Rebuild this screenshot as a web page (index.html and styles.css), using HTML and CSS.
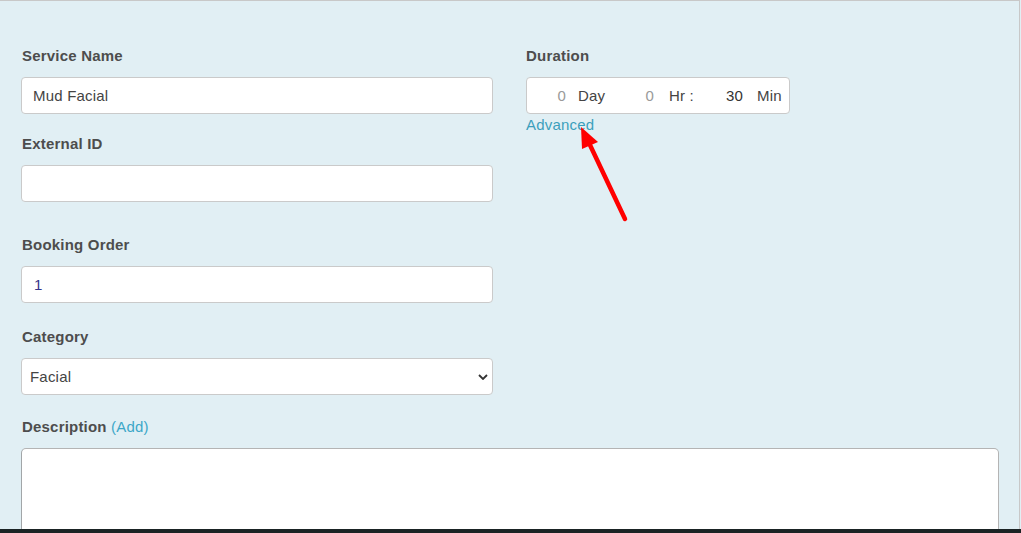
FILE: index.html
```html
<!DOCTYPE html>
<html lang="en">
<head>
    <meta charset="UTF-8">
    <title>Edit Service</title>
    <link rel="stylesheet" href="styles.css">
</head>
<body>
    <div class="panel">
        <div class="columns">
            <div class="col">
                <div class="field">
                    <label class="field-label">Service Name</label>
                    <input class="text-input" type="text" value="Mud Facial">
                </div>
                <div class="field field-ext">
                    <label class="field-label">External ID</label>
                    <input class="text-input" type="text" value="">
                </div>
                <div class="field field-order">
                    <label class="field-label">Booking Order</label>
                    <input class="text-input order-input" type="text" value="1">
                </div>
                <div class="field field-cat">
                    <label class="field-label">Category</label>
                    <div class="select-wrap">
                        <select class="select-input">
                            <option>Facial</option>
                            <option>Massage</option>
                            <option>Nails</option>
                        </select>
                        <svg class="chevron" width="10" height="6" viewBox="0 0 10 6">
                            <path d="M1 1 L5 5 L9 1" fill="none" stroke="#333" stroke-width="1.8"/>
                        </svg>
                    </div>
                </div>
            </div>

            <div class="col">
                <div class="field">
                    <label class="field-label duration-label">Duration</label>
                    <div class="duration">
                        <input class="dur-num dur-day" type="text" placeholder="0">
                        <span class="dur-unit unit-day">Day</span>
                        <input class="dur-num dur-hr" type="text" placeholder="0">
                        <span class="dur-unit unit-hr">Hr :</span>
                        <input class="dur-num dur-min" type="text" value="30">
                        <span class="dur-unit unit-min">Min</span>
                    </div>
                    <a href="#" class="link advanced-link">Advanced</a>
                </div>
            </div>
        </div>

        <div class="field field-desc">
            <label class="field-label">Description <a href="#" class="link add-link">(Add)</a></label>
            <textarea class="desc-input"></textarea>
        </div>

        <!-- annotation arrow -->
        <svg class="arrow" width="1021" height="533" viewBox="0 0 1021 533">
            <line x1="625" y1="219" x2="590" y2="145" stroke="#ff0000" stroke-width="4.5" stroke-linecap="round"/>
            <polygon points="581,127 582,149 598,142" fill="#ff0000"/>
        </svg>
    </div>
    <div class="bottom-bar"></div>
</body>
</html>
```

FILE: styles.css
```css
* {
    margin: 0;
    padding: 0;
    box-sizing: border-box;
}

body {
    font-family: 'Liberation Sans', Arial, sans-serif;
    font-size: 15px;
    letter-spacing: 0.2px;
    color: #444;
    background-color: #e1eff4;
    overflow: hidden;
}

.panel {
    position: relative;
    width: 1020px;
    height: 529px;
    overflow: hidden;
    border-top: 1px solid #c8c8c8;
    border-right: 1px solid #c8c8c8;
    padding: 46px 20px 0 21px;
}

.bottom-bar {
    height: 4px;
    background-color: #1a2324;
}

.columns {
    display: grid;
    grid-template-columns: 472px 1fr;
    column-gap: 33px;
}

.field-label {
    display: block;
    font-weight: bold;
    font-size: 15px;
    line-height: 17px;
    color: #4d4d4d;
    margin-bottom: 13px;
    padding-left: 1px;
}

.duration-label {
    padding-left: 0;
}

.field-ext {
    margin-top: 21px;
}

.field-order {
    margin-top: 34px;
}

.field-cat {
    margin-top: 25px;
}

.field-desc {
    margin-top: 23px;
}

.text-input,
.select-input {
    display: block;
    width: 100%;
    height: 37px;
    border: 1px solid #cacaca;
    border-radius: 4px;
    background: #fff;
    font-family: inherit;
    font-size: 15px;
    letter-spacing: 0.2px;
    color: #444;
    padding: 0 11px;
    outline: none;
}

.order-input {
    color: #34348a;
    padding-left: 12px;
}

.select-wrap {
    position: relative;
}

.select-input {
    appearance: none;
    -webkit-appearance: none;
    padding-left: 8px;
    height: 37px;
}

.chevron {
    position: absolute;
    right: 5px;
    top: 16px;
    pointer-events: none;
}

.duration {
    display: flex;
    align-items: center;
    width: 264px;
    height: 37px;
    background: #fff;
    border: 1px solid #cacaca;
    border-radius: 4px;
}

.dur-num {
    border: none;
    outline: none;
    background: transparent;
    font-family: inherit;
    font-size: 15px;
    letter-spacing: 0.2px;
    text-align: right;
    color: #333;
    height: 100%;
}

.dur-num::placeholder {
    color: #9a9a9a;
}

.dur-day {
    width: 39px;
}

.dur-hr {
    width: 49px;
}

.dur-min {
    width: 53px;
}

.dur-unit {
    color: #444;
    white-space: nowrap;
}

.unit-day {
    margin-left: 12px;
    width: 27px;
}

.unit-hr {
    margin-left: 15px;
    width: 21px;
    overflow: visible;
}

.unit-min {
    margin-left: 14px;
}

.link {
    color: #3c9fbc;
    text-decoration: none;
    line-height: 17px;
    display: inline-block;
}

.advanced-link {
    margin-top: 2px;
}

.add-link {
    font-weight: normal;
    color: #3ca7c8;
}

.desc-input {
    display: block;
    width: 100%;
    height: 120px;
    border: 1px solid #b4b4b4;
    border-left-color: #a2a6a8;
    border-radius: 5px;
    background: #fff;
    resize: none;
    outline: none;
}

.arrow {
    position: absolute;
    left: 0;
    top: -1px;
    pointer-events: none;
}
```
